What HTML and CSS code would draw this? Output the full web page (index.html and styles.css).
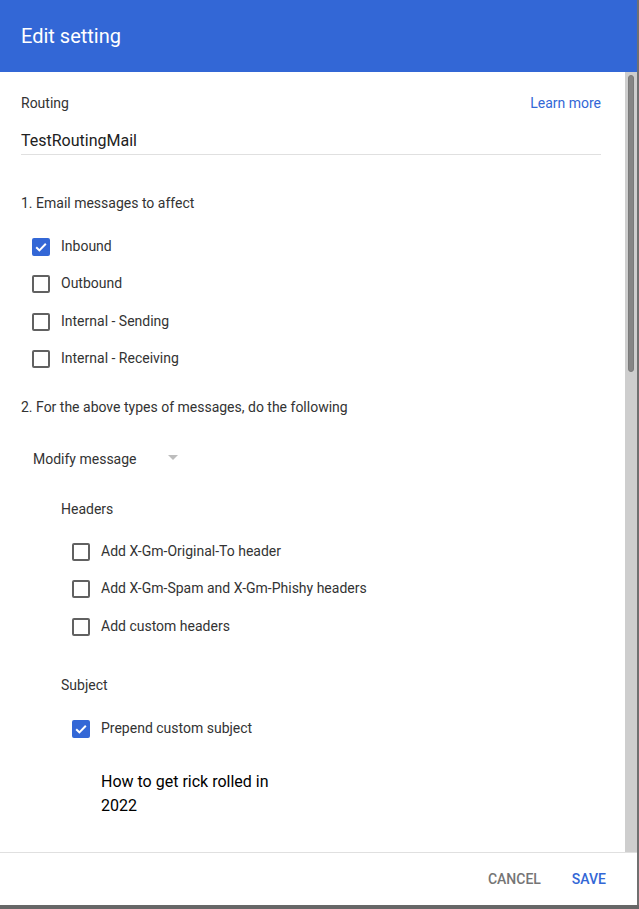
FILE: index.html
```html
<!DOCTYPE html>
<html>
<head>
<meta charset="utf-8">
<link rel="stylesheet" href="styles.css">
</head>
<body>
<div class="page">
  <div class="dialog">
    <div class="header">Edit setting</div>
    <div class="main">
      <div class="content">
        <div class="top-row">
          <span class="label">Routing</span>
          <a class="link">Learn more</a>
        </div>
        <div class="name-input">TestRoutingMail</div>

        <div class="section-title s1">1. Email messages to affect</div>
        <div class="checks c1">
          <div class="row"><span class="box checked"><svg viewBox="0 0 18 18" width="18" height="18"><path d="M4.2 9.2l3.2 3.2 6.4-6.6" fill="none" stroke="#fff" stroke-width="2"/></svg></span><span class="text">Inbound</span></div>
          <div class="row"><span class="box"></span><span class="text">Outbound</span></div>
          <div class="row"><span class="box"></span><span class="text">Internal - Sending</span></div>
          <div class="row"><span class="box"></span><span class="text">Internal - Receiving</span></div>
        </div>

        <div class="section-title s2">2. For the above types of messages, do the following</div>
        <div class="dropdown">
          <span class="dd-text">Modify message</span>
          <span class="dd-arrow"></span>
        </div>

        <div class="group">
          <div class="group-title g-headers">Headers</div>
          <div class="checks c2">
            <div class="row"><span class="box"></span><span class="text">Add X-Gm-Original-To header</span></div>
            <div class="row"><span class="box"></span><span class="text">Add X-Gm-Spam and X-Gm-Phishy headers</span></div>
            <div class="row"><span class="box"></span><span class="text">Add custom headers</span></div>
          </div>
          <div class="group-title g-subject">Subject</div>
          <div class="checks c3">
            <div class="row"><span class="box checked"><svg viewBox="0 0 18 18" width="18" height="18"><path d="M4.2 9.2l3.2 3.2 6.4-6.6" fill="none" stroke="#fff" stroke-width="2"/></svg></span><span class="text">Prepend custom subject</span></div>
          </div>
          <div class="subject-text">How to get rick rolled in 2022</div>
        </div>
      </div>
      <div class="scrollbar"><div class="thumb"></div></div>
    </div>
    <div class="footer">
      <button class="btn cancel">CANCEL</button>
      <button class="btn save">SAVE</button>
    </div>
  </div>
  <div class="edge"></div>
</div>
</body>
</html>
```

FILE: styles.css
```css
* { box-sizing: border-box; }
html, body { margin: 0; padding: 0; }
body {
  width: 639px;
  height: 909px;
  overflow: hidden;
  background: #676767;
  font-family: Roboto, "Liberation Sans", sans-serif;
  color: #212121;
}
.page {
  display: flex;
  width: 639px;
  height: 909px;
}
.dialog {
  width: 637px;
  height: 905px;
  background: #fff;
  display: flex;
  flex-direction: column;
}
.edge {
  width: 2px;
  height: 905px;
  background: #707070;
}
.header {
  height: 72px;
  flex: none;
  background: #3367d6;
  color: #fff;
  font-size: 20px;
  line-height: 72px;
  padding-left: 21px;
}
.main {
  flex: 1;
  display: flex;
  min-height: 0;
}
.content {
  flex: 1;
  padding: 20px 24px 0 21px;
  font-size: 14px;
  overflow: hidden;
}
.top-row {
  display: flex;
  justify-content: space-between;
  line-height: 22px;
}
.label { color: #333; }
.link { color: #3367d6; }
.name-input {
  margin-top: 16px;
  height: 25px;
  font-size: 16px;
  line-height: 22px;
  color: #212121;
  border-bottom: 1px solid #e0e0e0;
}
.section-title {
  line-height: 22px;
  color: #333;
}
.s1 { margin-top: 37px; }
.s2 { margin-top: 19px; }
.checks { display: flex; flex-direction: column; }
.c1 { margin-top: 13px; padding-left: 11px; }
.row {
  height: 37.5px;
  display: flex;
  align-items: center;
  gap: 11px;
}
.box {
  width: 18px;
  height: 18px;
  border: 2px solid #616161;
  border-radius: 2px;
  flex: none;
  display: flex;
  align-items: center;
  justify-content: center;
  position: relative;
  top: 1px;
}
.box.checked {
  background: #3367d6;
  border-color: #3367d6;
}
.box.checked svg { flex: none; margin: -2px; }
.text { color: #333; line-height: 20px; }
.dropdown {
  margin-top: 30px;
  padding-left: 12px;
  display: flex;
  align-items: center;
  line-height: 22px;
  color: #333;
}
.dd-text { width: 135px; }
.dd-arrow {
  width: 0;
  height: 0;
  border-left: 5.5px solid transparent;
  border-right: 5.5px solid transparent;
  border-top: 5.5px solid #bdbdbd;
  position: relative;
  top: -2px;
}
.group { padding-left: 40px; }
.group-title { line-height: 22px; color: #333; }
.g-headers { margin-top: 28px; }
.c2 { margin-top: 12px; padding-left: 11px; }
.g-subject { margin-top: 29.5px; }
.c3 { margin-top: 13px; padding-left: 11px; }
.subject-text {
  margin-top: 23px;
  margin-left: 40px;
  width: 180px;
  font-size: 16px;
  line-height: 24px;
  color: #000;
}
.scrollbar {
  width: 12px;
  flex: none;
  background: #cecece;
  padding: 3px 3px 0 3px;
}
.thumb {
  width: 6px;
  height: 297px;
  background: #858585;
  border-radius: 3px;
  border: 1px solid #7a7a7a;
}
.footer {
  height: 53px;
  flex: none;
  border-top: 1px solid #e0e0e0;
  display: flex;
  justify-content: flex-end;
  align-items: center;
  padding-right: 23px;
  gap: 15px;
}
.btn {
  background: none;
  border: none;
  font-family: Roboto, "Liberation Sans", sans-serif;
  font-size: 14px;
  font-weight: 500;
  padding: 8px 8px;
  line-height: 20px;
}
.cancel { color: #757575; }
.save { color: #3367d6; }
```
